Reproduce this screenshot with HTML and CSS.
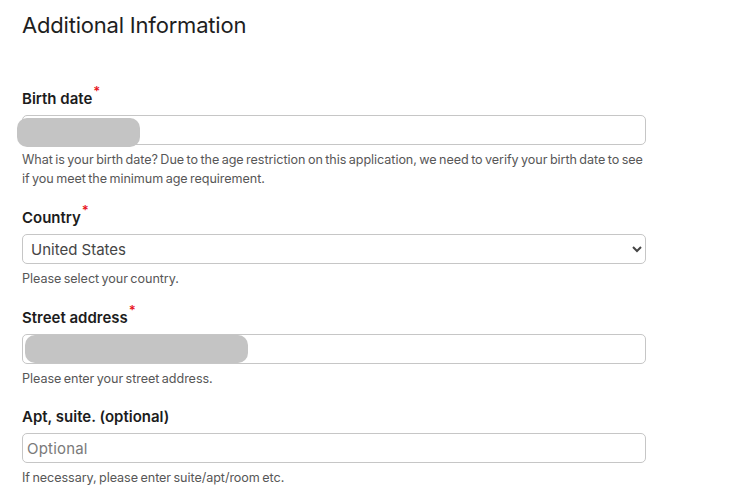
FILE: index.html
```html
<!DOCTYPE html>
<html lang="en">

<head>
    <meta charset="UTF-8">
    <meta name="viewport" content="width=device-width, initial-scale=1.0">
    <title>Additional Information</title>
    <link rel="stylesheet" href="styles.css">
</head>

<body>
    <div class="container">
        <h2>Additional Information</h2>

        <div class="field">
            <label class="label" for="birth">Birth date<span class="req">*</span></label>
            <div class="input-wrap">
                <input class="input" id="birth" type="text">
                <div class="redact redact-birth"></div>
            </div>
            <p class="help">What is your birth date? Due to the age restriction on this application, we need to verify your birth date to see if you meet the minimum age requirement.</p>
        </div>

        <div class="field">
            <label class="label" for="country">Country<span class="req">*</span></label>
            <select class="input select" id="country">
                <option>United States</option>
            </select>
            <p class="help">Please select your country.</p>
        </div>

        <div class="field">
            <label class="label" for="street">Street address<span class="req">*</span></label>
            <div class="input-wrap">
                <input class="input" id="street" type="text">
                <div class="redact redact-street"></div>
            </div>
            <p class="help">Please enter your street address.</p>
        </div>

        <div class="field">
            <label class="label" for="apt">Apt, suite. (optional)</label>
            <input class="input" id="apt" type="text" placeholder="Optional">
            <p class="help">If necessary, please enter suite/apt/room etc.</p>
        </div>
    </div>
</body>

</html>
```

FILE: styles.css
```css
* {
    margin: 0;
    padding: 0;
    box-sizing: border-box;
    font-family: Inter, "Noto Sans", sans-serif;
}

body {
    background: #fff;
    color: #1f1f1f;
}

.container {
    padding: 11px 0 0 22px;
    width: 646px;
}

h2 {
    font-size: 22px;
    font-weight: 400;
    line-height: 28px;
    color: #1e1e1e;
    letter-spacing: -0.2px;
    margin-bottom: 50px;
}

.field {
    display: flex;
    flex-direction: column;
    margin-bottom: 20px;
}

.field:last-child {
    margin-top: -1px;
}

.label {
    font-size: 15px;
    font-weight: 600;
    line-height: 20px;
    color: #1c1c1c;
    margin-bottom: 6px;
}

.req {
    color: #e8141c;
    font-size: 13px;
    position: relative;
    top: -8px;
    margin-left: 1px;
}

.input-wrap {
    position: relative;
}

.input {
    width: 100%;
    height: 30px;
    border: 1px solid #c6c6c6;
    border-radius: 5px;
    background: #fff;
    padding: 0 4px;
    font-size: 15px;
    color: #444;
    outline: none;
}

.input::placeholder {
    color: #7a7a7a;
    letter-spacing: 0.2px;
}

.select {
    padding: 0 4px;
    color: #454545;
}

.redact {
    position: absolute;
    background: #c4c4c4;
    border-radius: 10px;
}

.redact-birth {
    left: -5px;
    top: 3px;
    width: 123px;
    height: 29px;
}

.redact-street {
    left: 3px;
    top: 1px;
    width: 223px;
    height: 28px;
}

.help {
    margin-top: 5px;
    font-size: 12.6px;
    line-height: 19px;
    color: #575757;
    letter-spacing: -0.06px;
    word-spacing: -1px;
}
```
